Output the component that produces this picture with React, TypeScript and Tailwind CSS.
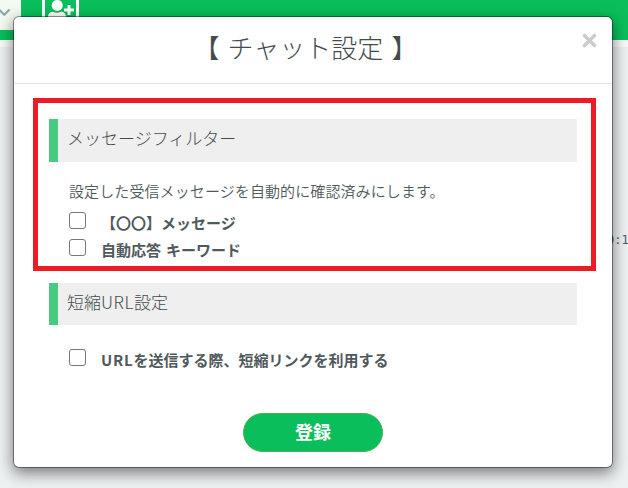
import type { ReactNode } from "react";

const SectionTitle = ({ children, className }: { children: ReactNode; className: string }) => (
  <h2 className={`border-l-[9px] border-[#45cc7e] bg-[#efefef] pl-[9px] text-[17px] font-light text-[#434b4e] ${className}`}>
    {children}
  </h2>
);

const CheckRow = ({ children }: { children: ReactNode }) => (
  <label className="flex h-[27px] items-start pl-5">
    <input
      type="checkbox"
      className="size-[17px] shrink-0 appearance-none rounded-[3px] border border-[#767676] bg-white"
    />
    <span className="ml-[15px] text-[15px] leading-[21px] font-bold [word-spacing:1.5px] whitespace-nowrap">
      {children}
    </span>
  </label>
);

const PageHeader = () => (
  <header className="flex h-10 items-start bg-[#0abf5b]">
    <div className="flex h-[30px] w-[21px] items-start bg-[#f2faf1]">
      <svg className="mt-2 h-2 w-[11px]" viewBox="0 0 11 8" fill="none" stroke="#90a4ae" strokeWidth="2">
        <path d="M-1 1.5 4.3 6.8 9.6 1.5" />
      </svg>
    </div>
    <div className="ml-[21px] h-[30px] w-[37px] border-x-[3px] border-white">
      <svg className="h-[20px] w-[31px]" viewBox="0 0 31 20" fill="#fff">
        <circle cx="12.2" cy="5.4" r="5.5" />
        <path d="M3 20v-3.200c0-3 2.300-5 5-5 1.400.7 2.600 1 4 1s2.600-.3 4-1c2.700 0 5 2 5 5V20z" />
        <path d="M22.500 5h3v3.500H29v3h-3.500V15h-3v-3.500H19v-3h3.500z" />
      </svg>
    </div>
  </header>
);

const App = () => (
  <div className="relative h-[488px] w-[628px] overflow-hidden bg-[#edf1f2] font-['Noto_Sans_CJK_JP',sans-serif] text-[#50595c]">
    <PageHeader />
    <div className="h-[7px] bg-[#f9fafa]" />
    <p className="mt-[184px] ml-[607px] font-['DejaVu_Sans_Mono',monospace] text-[12px] leading-[18px] whitespace-nowrap">
      9:1
    </p>

    <div
      role="dialog"
      className="absolute top-4 left-[13px] flex h-[452px] w-[600px] flex-col rounded-md border border-black/40 bg-white bg-clip-padding shadow-[0_5px_15px_rgba(0,0,0,0.5)]"
    >
      <div className="relative h-[67px] border-b border-[#e5e5e5] text-center">
        <h1 className="pr-[15px] text-[26px] leading-[60px] font-light text-[#434b4e] [word-spacing:2.5px] whitespace-pre">
          【 チャット設定 】
        </h1>
        <button type="button" aria-label="閉じる" className="absolute top-4 right-[15px]">
          <svg className="size-[15px]" viewBox="0 0 15 15" stroke="#ccc" strokeWidth="3.6" strokeLinecap="round">
            <path d="m2.500 2.500 10 10M12.500 2.500l-10 10" />
          </svg>
        </button>
      </div>

      <div className="flex flex-col px-[35px] pt-[35px]">
        <SectionTitle className="h-[43px] leading-[38px]">メッセージフィルター</SectionTitle>
        <p className="mt-[18px] mb-[10px] pl-5 text-[15px] leading-[22px] font-[350] tracking-[0.1px] whitespace-nowrap">
          設定した受信メッセージを自動的に確認済みにします。
        </p>
        <CheckRow>【〇〇】メッセージ</CheckRow>
        <CheckRow>自動応答 キーワード</CheckRow>
        <SectionTitle className="mt-[17px] mb-6 h-[42px] leading-[37px]">
          短縮<span className="tracking-[0.6px]">URL</span>設定
        </SectionTitle>
        <CheckRow>
          <span className="tracking-[0.8px]">URL</span>を送信する際、短縮リンクを利用する
        </CheckRow>
        <button
          type="button"
          className="mt-[37px] h-[39px] w-[140px] self-center rounded-full border border-[#4cae4c] bg-[#0abf5b] pb-1 text-[18px] leading-none font-bold text-white"
        >
          登録
        </button>
      </div>
    </div>

    {/* highlight frame around the message filter settings */}
    <div className="pointer-events-none absolute top-[98px] left-[33px] h-[173px] w-[563px] border-5 border-[#ed1c24]" />
  </div>
);

export default App;
